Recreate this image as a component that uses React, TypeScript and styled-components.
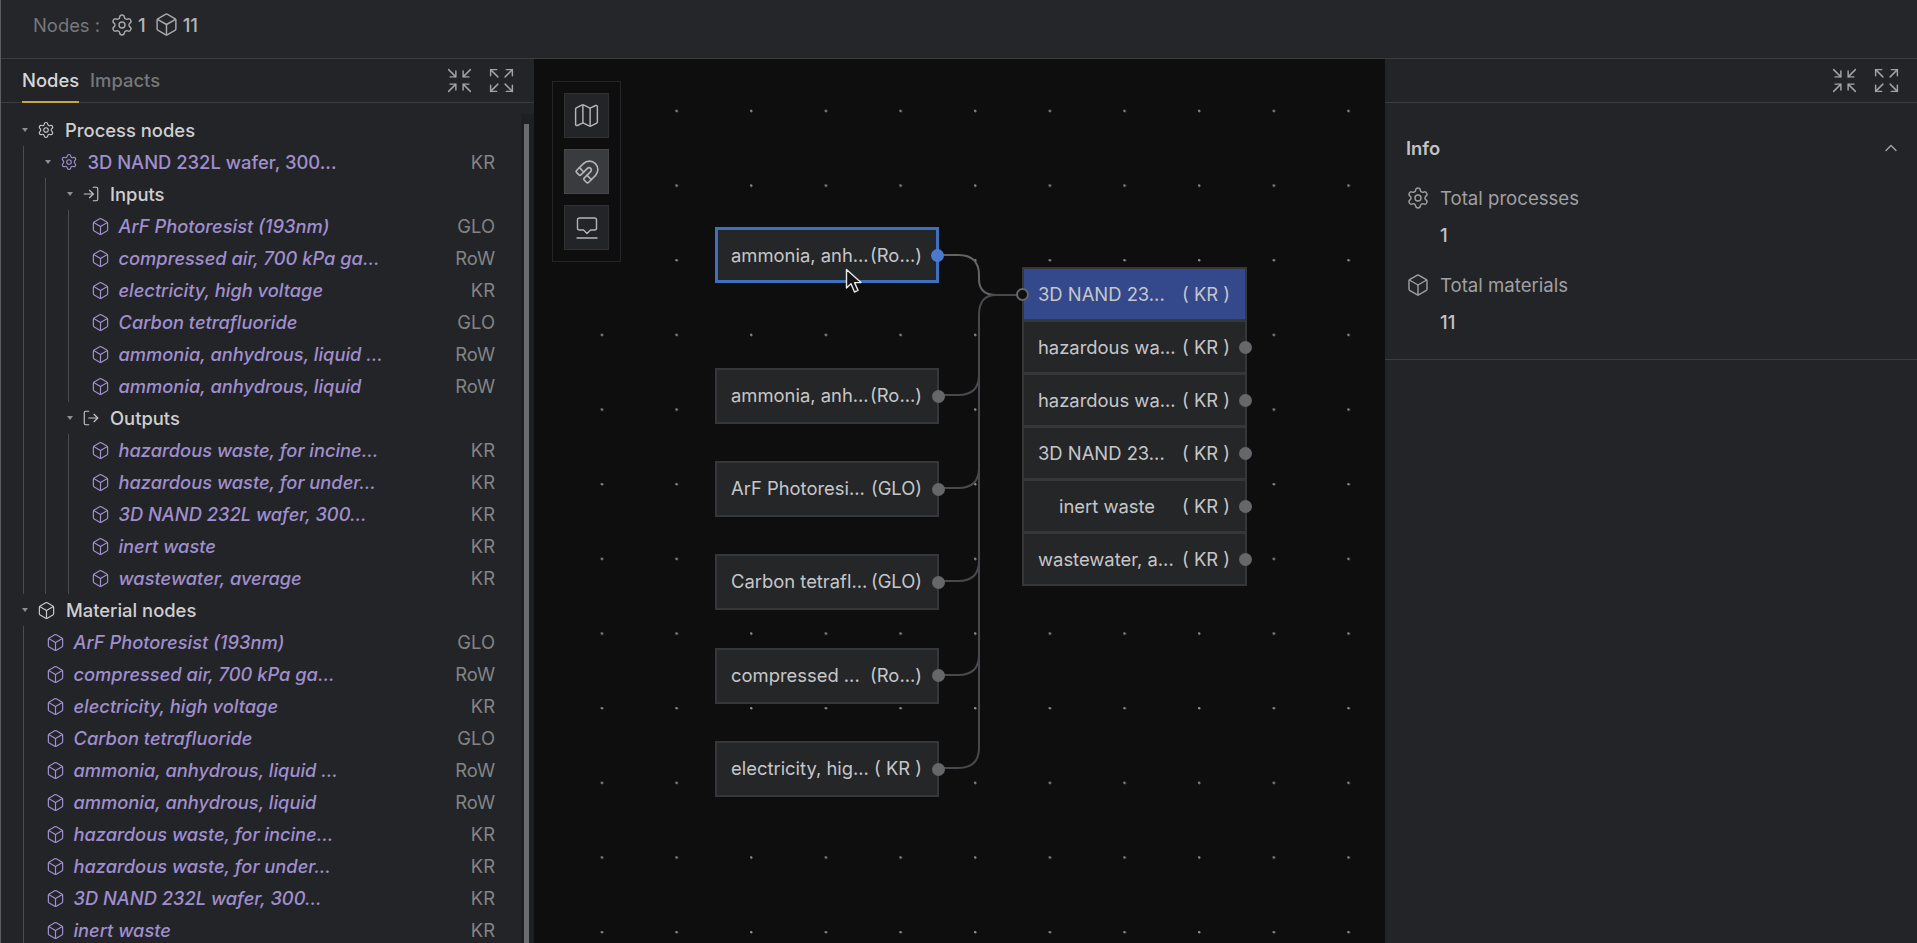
import styled, { createGlobalStyle } from 'styled-components';
import { Box, ChevronUp, Expand, LogIn, LogOut, Magnet, Map as MapIcon, Settings, Shrink } from 'lucide-react';

const GlobalStyle = createGlobalStyle`
  html, body { margin: 0; height: 100%; background: #0e0e0f; }
  #root { height: 100%; }
  * { box-sizing: border-box; }
`;

const inputs = [
  ['ArF Photoresist (193nm)', 'GLO'],
  ['compressed air, 700 kPa ga...', 'RoW'],
  ['electricity, high voltage', 'KR'],
  ['Carbon tetrafluoride', 'GLO'],
  ['ammonia, anhydrous, liquid ...', 'RoW'],
  ['ammonia, anhydrous, liquid', 'RoW'],
];

const outputs = [
  ['hazardous waste, for incine...', 'KR'],
  ['hazardous waste, for under...', 'KR'],
  ['3D NAND 232L wafer, 300...', 'KR'],
  ['inert waste', 'KR'],
  ['wastewater, average', 'KR'],
];

const materials = [...inputs, ...outputs];

const sources = [
  { top: 168, name: 'ammonia, anh...', region: '(Ro...)', selected: true },
  { top: 309, name: 'ammonia, anh...', region: '(Ro...)' },
  { top: 402, name: 'ArF Photoresi...', region: '(GLO)' },
  { top: 495, name: 'Carbon tetrafl...', region: '(GLO)' },
  { top: 588.5, name: 'compressed ...', region: '(Ro...)' },
  { top: 682, name: 'electricity, hig...', region: '( KR )' },
];

const processRows = [
  { name: '3D NAND 23...', header: true },
  { name: 'hazardous wa...' },
  { name: 'hazardous wa...' },
  { name: '3D NAND 23...' },
  { name: 'inert waste', centered: true },
  { name: 'wastewater, a...' },
];

const Leaf = ({ name, region }: { name: string; region: string }) => (
  <Row $leaf>
    <Box size={19} strokeWidth={1.5} color="#a08fcf" />
    <LeafName>{name}</LeafName>
    <Region>{region}</Region>
  </Row>
);

const PanelActions = () => (
  <Actions>
    <Shrink size={29} strokeWidth={1.2} />
    <Expand size={29} strokeWidth={1.2} />
  </Actions>
);

export default function App() {
  return (
    <Page>
      <GlobalStyle />
      <TopBar>
        <TopLabel>Nodes :</TopLabel>
        <Count>
          <Settings size={24} strokeWidth={1.4} />
          1
        </Count>
        <Count>
          <Box size={25} strokeWidth={1.4} />
          11
        </Count>
      </TopBar>
      <Main>
        <LeftPanel>
          <PanelBar>
            <Tab $active>Nodes</Tab>
            <Tab>Impacts</Tab>
            <PanelActions />
          </PanelBar>
          <TreeArea>
            <Row>
              <Caret />
              <Settings size={18} strokeWidth={1.5} color="#c8c8ca" />
              <GroupName>Process nodes</GroupName>
            </Row>
            <Branch>
              <Row>
                <Caret />
                <Settings size={18} strokeWidth={1.5} color="#a08fcf" />
                <ProcessName>3D NAND 232L wafer, 300...</ProcessName>
                <Region>KR</Region>
              </Row>
              <Branch>
                <Row>
                  <Caret />
                  <LogIn size={18} strokeWidth={1.5} color="#c8c8ca" />
                  <GroupName>Inputs</GroupName>
                </Row>
                <Branch>
                  {inputs.map(([name, region]) => (
                    <Leaf key={name} name={name} region={region} />
                  ))}
                </Branch>
                <Row>
                  <Caret />
                  <LogOut size={18} strokeWidth={1.5} color="#c8c8ca" />
                  <GroupName>Outputs</GroupName>
                </Row>
                <Branch>
                  {outputs.map(([name, region]) => (
                    <Leaf key={name} name={name} region={region} />
                  ))}
                </Branch>
              </Branch>
            </Branch>
            <Row>
              <Caret />
              <Box size={19} strokeWidth={1.5} color="#c8c8ca" />
              <GroupName>Material nodes</GroupName>
            </Row>
            <Branch>
              {materials.map(([name, region]) => (
                <Leaf key={name} name={name} region={region} />
              ))}
            </Branch>
            <ScrollTrack>
              <ScrollThumb />
            </ScrollTrack>
          </TreeArea>
        </LeftPanel>

        <Canvas>
          <Edges width="851" height="884" viewBox="0 0 851 884" fill="none">
            <path d="M408 196 H424 Q445 196 445 216 V220 Q445 236 462 236 H488" stroke="#636467" strokeWidth="2" />
            <path d="M408 336 H424 Q445 336 445 316 V256 Q445 236 462 236 H488" stroke="#48494c" strokeWidth="2" />
            <path d="M408 429 H424 Q445 429 445 409 V256" stroke="#48494c" strokeWidth="2" />
            <path d="M408 522 H424 Q445 522 445 502 V256" stroke="#48494c" strokeWidth="2" />
            <path d="M408 616 H424 Q445 616 445 596 V256" stroke="#48494c" strokeWidth="2" />
            <path d="M408 709 H424 Q445 709 445 689 V256" stroke="#48494c" strokeWidth="2" />
          </Edges>

          <Toolbar>
            <ToolButton>
              <MapIcon size={29} strokeWidth={1.2} />
            </ToolButton>
            <ToolButton $active>
              <Magnet size={26} strokeWidth={1.5} />
            </ToolButton>
            <ToolButton>
              <svg width="26" height="26" viewBox="0 0 26 26" fill="none" stroke="currentColor" strokeWidth="1.4" strokeLinejoin="round" strokeLinecap="round">
                <path d="M5.5 3 H20.5 A2 2 0 0 1 22.5 5 V13 A2 2 0 0 1 20.5 15 H16.5 L13 18.5 L9.5 15 H5.5 A2 2 0 0 1 3.5 13 V5 A2 2 0 0 1 5.5 3 Z" />
                <path d="M3 23 H23" />
              </svg>
            </ToolButton>
          </Toolbar>

          {sources.map((source) => (
            <SourceNode key={source.top} $top={source.top} $selected={source.selected}>
              <NodeName>{source.name}</NodeName>
              <NodeRegion>{source.region}</NodeRegion>
              <Handle $selected={source.selected} />
            </SourceNode>
          ))}

          <ProcessNode>
            {processRows.map((row, i) => (
              <ProcessRow key={i} $header={row.header}>
                <NodeName $centered={row.centered}>{row.name}</NodeName>
                <NodeRegion>( KR )</NodeRegion>
                {row.header ? <TargetHandle /> : <RowHandle />}
              </ProcessRow>
            ))}
          </ProcessNode>

          <Pointer width="18" height="26" viewBox="0 0 18 26">
            <path d="M1.5 1.5 V20 L6 15.8 L9.5 24 L13 22.4 L9.6 14.6 H16 Z" fill="#141415" stroke="#e8e8e8" strokeWidth="1.4" strokeLinejoin="round" />
          </Pointer>
        </Canvas>

        <RightPanel>
          <RightBar>
            <PanelActions />
          </RightBar>
          <InfoSection>
            <InfoHead>
              Info
              <ChevronUp size={20} strokeWidth={1.5} color="#a9a9ab" />
            </InfoHead>
            <InfoLabel>
              <Settings size={24} strokeWidth={1.4} />
              Total processes
            </InfoLabel>
            <InfoValue>1</InfoValue>
            <InfoLabel>
              <Box size={24} strokeWidth={1.4} />
              Total materials
            </InfoLabel>
            <InfoValue>11</InfoValue>
          </InfoSection>
        </RightPanel>
      </Main>
    </Page>
  );
}

const Page = styled.div`
  height: 943px;
  display: flex;
  flex-flow: column;
  overflow: hidden;
  border-left: 1px solid #5c5d60;
  font-family: Inter, 'Liberation Sans', sans-serif;
  font-size: 18.4px;
`;

const TopBar = styled.div`
  height: 59px;
  flex: 0 0 auto;
  display: flex;
  align-items: center;
  gap: 8px;
  padding: 0 0 9px 32px;
  background: #25262a;
  border-bottom: 1px solid #3b3c40;
`;

const TopLabel = styled.span`
  color: #77787b;
  margin-right: 2px;
`;

const Count = styled.span`
  display: flex;
  align-items: center;
  gap: 4px;
  color: #b5b5b7;
  font-weight: 500;
  svg {
    color: #a9a9ab;
  }
`;

const Main = styled.div`
  flex: 1;
  display: flex;
  min-height: 0;
`;

const LeftPanel = styled.div`
  width: 533px;
  flex: 0 0 auto;
  display: flex;
  flex-flow: column;
  background: #232427;
  overflow: hidden;
`;

const RightPanel = styled.div`
  flex: 1;
  background: #232427;
`;

const PanelBar = styled.div`
  height: 44px;
  display: flex;
  align-items: stretch;
  gap: 11px;
  padding: 0 18px 0 21px;
  border-bottom: 1px solid #3b3c40;
`;

const RightBar = styled(PanelBar)`
  padding-right: 16px;
`;

const Tab = styled.div<{ $active?: boolean }>`
  display: flex;
  align-items: center;
  font-weight: 500;
  margin-bottom: -1px;
  color: ${(props) => (props.$active ? '#d6d6d8' : '#77787b')};
  border-bottom: 2px solid ${(props) => (props.$active ? '#c8a63f' : 'transparent')};
`;

const Actions = styled.div`
  margin-left: auto;
  display: flex;
  align-items: center;
  gap: 13px;
  color: #a3a3a5;
`;

const TreeArea = styled.div`
  position: relative;
  flex: 1;
  padding: 11px 39px 0 0;
  overflow: hidden;
`;

const Branch = styled.div`
  margin-left: 21.5px;
  border-left: 1px solid #4c4d50;
`;

const Row = styled.div<{ $leaf?: boolean }>`
  height: 32px;
  display: flex;
  align-items: center;
  white-space: nowrap;
  padding-left: ${(props) => (props.$leaf ? '22px' : '21px')};
  svg {
    flex: 0 0 auto;
  }
`;

const Caret = styled.span`
  flex: 0 0 auto;
  width: 0;
  height: 0;
  margin-right: 9px;
  border-left: 3px solid transparent;
  border-right: 3px solid transparent;
  border-top: 4px solid #8d8e90;
`;

const GroupName = styled.span`
  margin-left: 10px;
  font-weight: 500;
  color: #cfcfd1;
`;

const ProcessName = styled.span`
  margin-left: 10px;
  font-weight: 500;
  color: #a08fcf;
`;

const LeafName = styled.span`
  margin-left: 9px;
  font-size: 18.3px;
  font-style: italic;
  font-weight: 500;
  color: #a08fcf;
`;

const Region = styled.span`
  margin-left: auto;
  color: #838486;
`;

const ScrollTrack = styled.div`
  position: absolute;
  top: 11px;
  right: 0;
  bottom: 0;
  width: 13px;
  background: #1e1f22;
  padding: 10px 0 0 3px;
`;

const ScrollThumb = styled.div`
  width: 5px;
  height: 100%;
  background: #6a6b6e;
`;

const Canvas = styled.div`
  position: relative;
  width: 851px;
  flex: 0 0 auto;
  overflow: hidden;
  background-color: #0e0e0f;
  background-image: radial-gradient(circle at 68px 52px, #8c8c8c 1px, transparent 1.5px);
  background-size: 74.67px 74.67px;
`;

const Edges = styled.svg`
  position: absolute;
  left: 0;
  top: 0;
`;

const Toolbar = styled.div`
  position: absolute;
  left: 18px;
  top: 22px;
  display: flex;
  flex-flow: column;
  gap: 11px;
  padding: 11px;
  background: #0e0e0f;
  border: 1px solid #242528;
`;

const ToolButton = styled.div<{ $active?: boolean }>`
  width: 45px;
  height: 45px;
  display: flex;
  align-items: center;
  justify-content: center;
  color: #b5b5b7;
  background: ${(props) => (props.$active ? '#3a3b3f' : '#232427')};
  border: 1px solid ${(props) => (props.$active ? '#46474b' : '#2f3033')};
`;

const SourceNode = styled.div<{ $top: number; $selected?: boolean }>`
  position: absolute;
  left: 181px;
  top: ${(props) => props.$top}px;
  width: 224px;
  height: 56px;
  display: flex;
  align-items: center;
  padding: 0 ${(props) => (props.$selected ? '14px' : '15px')} ${(props) => (props.$selected ? '1px' : '2px')} ${(props) => (props.$selected ? '13px' : '14px')};
  color: #c6c6c8;
  background: #252628;
  border: ${(props) => (props.$selected ? '3px solid #3f70c0' : '2px solid #36373a')};
`;

const ProcessNode = styled.div`
  position: absolute;
  left: 488px;
  top: 208px;
  width: 225px;
  display: flex;
  flex-flow: column;
  border: 2px solid #36373a;
  background: #252628;
`;

const ProcessRow = styled.div<{ $header?: boolean }>`
  position: relative;
  height: 53px;
  display: flex;
  align-items: center;
  padding: 0 15px 0 14px;
  color: #c6c6c8;
  background: ${(props) => (props.$header ? '#34488c' : 'transparent')};
  border-bottom: 3px solid #36373a;
  &:last-child {
    height: 50px;
    border-bottom: none;
  }
`;

const NodeName = styled.span<{ $centered?: boolean }>`
  width: 138px;
  flex: 0 0 auto;
  white-space: nowrap;
  text-align: ${(props) => (props.$centered ? 'center' : 'left')};
`;

const NodeRegion = styled.span`
  margin-left: auto;
  white-space: nowrap;
`;

const Handle = styled.span<{ $selected?: boolean }>`
  position: absolute;
  right: -8px;
  top: 50%;
  width: 13px;
  height: 13px;
  margin-top: -6.5px;
  border-radius: 50%;
  background: ${(props) => (props.$selected ? '#4a7bcb' : '#66676a')};
`;

const RowHandle = styled(Handle)`
  right: -7px;
`;

const TargetHandle = styled.span`
  position: absolute;
  left: -8px;
  top: 50%;
  width: 13px;
  height: 13px;
  margin-top: -6.5px;
  border-radius: 50%;
  background: #0f0f10;
  border: 2px solid #66676a;
`;

const Pointer = styled.svg`
  position: absolute;
  left: 311px;
  top: 209px;
`;

const InfoSection = styled.div`
  display: flex;
  flex-flow: column;
  padding: 34px 16px 0 21px;
  height: 257px;
  border-bottom: 1px solid #3b3c40;
`;

const InfoHead = styled.div`
  display: flex;
  align-items: center;
  justify-content: space-between;
  font-weight: 600;
  color: #c3c3c5;
  margin-bottom: 27px;
`;

const InfoLabel = styled.div`
  display: flex;
  align-items: center;
  gap: 10px;
  height: 25px;
  font-size: 18.6px;
  color: #a0a0a2;
  svg {
    flex: 0 0 auto;
  }
`;

const InfoValue = styled.div`
  margin: 14px 0 27px 34px;
  color: #c3c3c5;
  font-weight: 500;
`;
